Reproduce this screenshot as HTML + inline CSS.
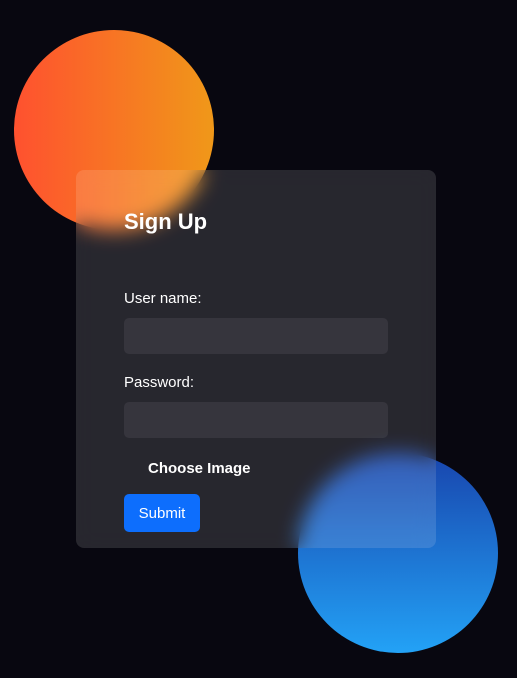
<!DOCTYPE html>
<html><head><style>
html,body{margin:0;padding:0;width:517px;height:678px;background:#080710;overflow:hidden;font-family:"Liberation Sans",sans-serif;}
.c1{position:absolute;left:14px;top:30px;width:200px;height:200px;border-radius:50%;background:linear-gradient(to right,#ff512f,#f09819);}
.c2{position:absolute;left:298px;top:453px;width:200px;height:200px;border-radius:50%;background:linear-gradient(#1845ad,#23a2f6);}
.card{position:absolute;left:76px;top:170px;width:360px;height:378px;border-radius:8px;background:rgba(255,255,255,0.13);backdrop-filter:blur(10px);-webkit-backdrop-filter:blur(10px);}
h3{position:absolute;left:48px;top:39px;margin:0;color:#fff;font-size:22px;font-weight:bold;}
.l{position:absolute;left:48px;color:#fff;font-size:15px;}
.i{position:absolute;left:48px;width:264px;height:36px;border-radius:5px;background:rgba(255,255,255,0.07);}
.ch{position:absolute;left:72px;top:290px;color:#fff;font-weight:bold;font-size:15px;}
.b{position:absolute;left:48px;top:324px;width:76px;height:38px;border-radius:5px;background:#0d6efd;color:#fff;font-size:15px;line-height:40px;text-align:center;}
</style></head><body>
<div class="c1"></div><div class="c2"></div>
<div class="card">
<h3>Sign Up</h3>
<div class="l" style="top:120px">User name:</div>
<div class="i" style="top:148px"></div>
<div class="l" style="top:204px">Password:</div>
<div class="i" style="top:232px"></div>
<div class="ch">Choose Image</div>
<div class="b">Submit</div>
</div>
</body></html>
